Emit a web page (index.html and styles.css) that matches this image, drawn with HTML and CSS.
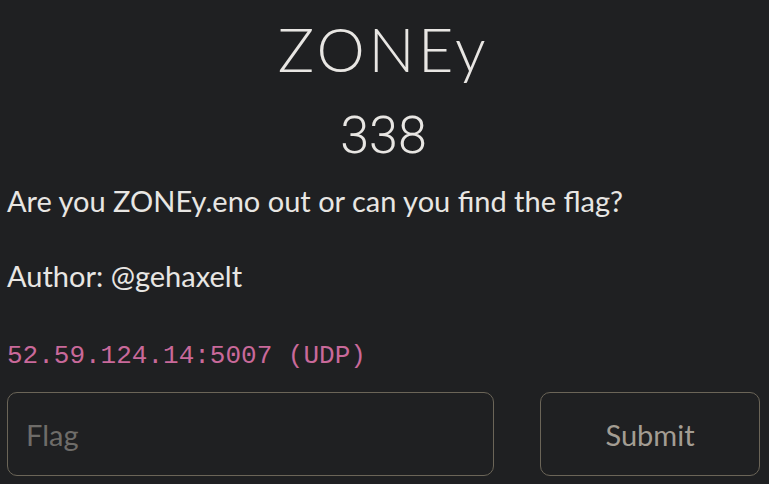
FILE: index.html
```html
<!DOCTYPE html>
<html>
<head>
<meta charset="utf-8">
<link rel="stylesheet" href="styles.css">
</head>
<body>
<div class="modal">
  <h1 class="title">ZONEy</h1>
  <h2 class="value">338</h2>
  <div class="desc">
    <p>Are you ZONEy.eno out or can you find the flag?</p>
    <p>Author: @gehaxelt</p>
    <p class="conn"><code>52.59.124.14:5007 (UDP)</code></p>
  </div>
  <div class="submit-row">
    <input class="flag" type="text" placeholder="Flag">
    <button class="btn">Submit</button>
  </div>
</div>
</body>
</html>
```
FILE: styles.css
```css
html, body {
  margin: 0;
  padding: 0;
  background: #1f2022;
  height: 100%;
  overflow: hidden;
}
body {
  font-family: Lato, "Liberation Sans", sans-serif;
  color: #e8e6e3;
}
.modal {
  padding: 0 9px 0 7px;
}
.title {
  margin: 0;
  padding-top: 13px;
  text-align: center;
  font-weight: 300;
  font-size: 61px;
  line-height: 72px;
  letter-spacing: 3.5px;
}
.value {
  margin: 0;
  padding-top: 20px;
  text-align: center;
  font-family: Roboto, sans-serif;
  font-weight: 300;
  font-size: 52px;
  line-height: 62px;
}
.desc {
  padding-top: 13px;
}
.desc p {
  margin: 0 0 33px 0;
  font-size: 29px;
  line-height: 42px;
}
.desc p.conn {
  margin: 36px 0 16px 0;
  font-size: 26px;
  line-height: 40px;
}
.conn code {
  font-family: "Liberation Mono", monospace;
  font-size: 26px;
  color: #c9699a;
}
.submit-row {
  display: flex;
  gap: 46px;
}
.flag {
  box-sizing: border-box;
  width: 487px;
  height: 84px;
  background: #1f2022;
  border: 1.5px solid #6b6558;
  border-radius: 10px;
  padding: 0 18px;
  font-family: Lato, sans-serif;
  font-size: 29px;
  color: #e8e6e3;
  outline: none;
}
.flag::placeholder {
  color: #6e6c69;
}
.btn {
  box-sizing: border-box;
  width: 220px;
  height: 84px;
  background: transparent;
  border: 1.5px solid #6b6558;
  border-radius: 10px;
  font-family: Lato, sans-serif;
  font-size: 29px;
  color: #a39d93;
}
```
